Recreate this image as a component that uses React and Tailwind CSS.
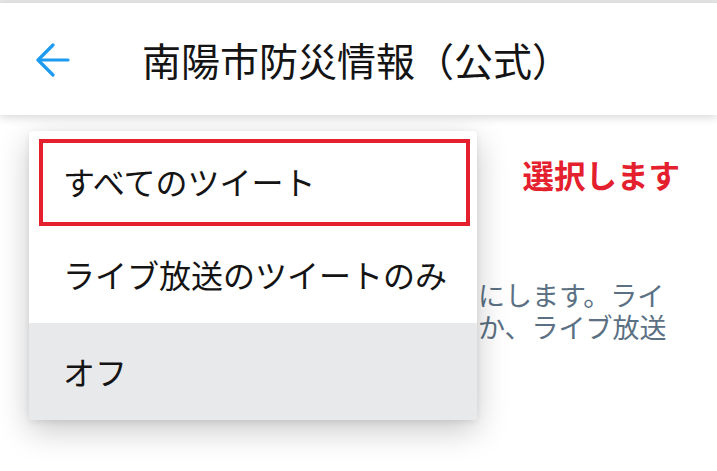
import React from "react";

const font = { fontFamily: '"Noto Sans CJK JP", "Noto Sans", sans-serif' };

const options = [
    { id: "all", label: "すべてのツイート" },
    { id: "live", label: "ライブ放送のツイートのみ" },
    { id: "off", label: "オフ" },
];

const BackArrow = () => (
    <svg width="34" height="34" viewBox="0 0 34 34" fill="none" stroke="#1d9bf0" strokeWidth="3.2" strokeLinecap="round" strokeLinejoin="round">
        <path d="M32 17H3" />
        <path d="M17 2L2 17l15 15" />
    </svg>
);

const Menu = ({ selected }) => {
    return (
        <div className="absolute left-[29px] top-[131px] w-[448px] rounded-[4px] bg-white overflow-hidden shadow-[0_10px_32px_rgba(0,0,0,0.22),0_2px_6px_rgba(0,0,0,0.08)]">
            {options.map((opt) => {
                if (opt.id === "all") {
                    return (
                        <div key={opt.id} className="h-[96px] pt-[8px] pl-[10px] pr-[7px]">
                            <div className="h-[87px] border-[4px] border-[#e5202e] flex items-center pl-[20px] pb-[3px] text-[32px] text-[#141414]">
                                {opt.label}
                            </div>
                        </div>
                    );
                }
                return (
                    <div
                        key={opt.id}
                        className={`h-[96px] flex items-center pl-[34px] pb-[2px] text-[32px] text-[#141414] ${selected === opt.id ? "bg-[#e8e9eb] h-[97px]" : ""}`}
                    >
                        {opt.label}
                    </div>
                );
            })}
        </div>
    );
};

export default function App() {
    return (
        <div className="relative w-[717px] h-[471px] overflow-hidden bg-white" style={font}>
            <div className="h-[3px] bg-[#e4e4e4]" />
            <div className="relative z-10 h-[112px] bg-white flex items-center shadow-[0_3px_8px_rgba(0,0,0,0.14)]">
                <div className="pl-[36px] pt-[2px]">
                    <BackArrow />
                </div>
                <div className="ml-[72px] text-[39px] leading-none text-[#141414]">南陽市防災情報（公式）</div>
            </div>

            <div className="flex justify-end pr-[37px] pt-[44px]">
                <div className="text-[31.5px] font-bold text-[#e5202e] leading-none">選択します</div>
            </div>
            <div className="pl-[397px] pt-[88px] text-[27px] leading-[32px] text-[#5b7083] whitespace-nowrap">
                <div>をオフにします。ライ</div>
                <div>イートか、ライブ放送</div>
            </div>

            <Menu selected="off" />
        </div>
    );
}
